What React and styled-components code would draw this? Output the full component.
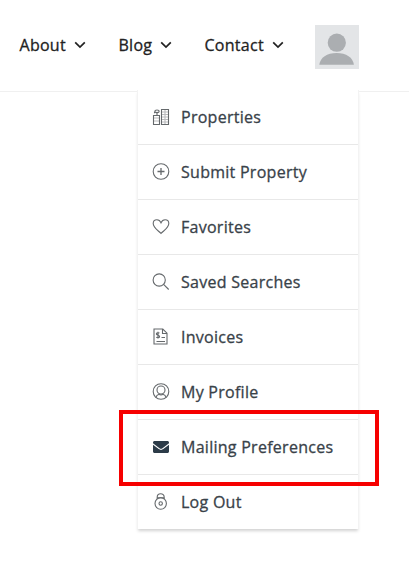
import styled, { createGlobalStyle } from "styled-components";

const navLinks = [
    { label: "About", width: 99 },
    { label: "Blog", width: 86 },
    { label: "Contact", width: 110.5 },
];

const App = () => {
    return (
        <Page>
            <GlobalStyle />
            <Header>
                <Nav>
                    {navLinks.map(({ label, width }) => (
                        <NavLink key={label} $width={width}>
                            {label}
                            <Chevron />
                        </NavLink>
                    ))}
                </Nav>
                <Avatar>
                    <svg width="44" height="44" viewBox="0 0 44 44" fill="#abaeb1">
                        <circle cx="21.8" cy="17.7" r="9.1" />
                        <path d="M4.3 39.7c.8-7.3 7.7-11.8 17.3-11.8s16.5 4.5 17.3 11.8z" />
                    </svg>
                </Avatar>
            </Header>

            <Menu>
                {menuItems.map(({ label, icon, solid, highlighted }) => (
                    <MenuItem key={label}>
                        <MenuIcon $solid={solid} viewBox="0 0 18 18">{icon}</MenuIcon>
                        {label}
                        {highlighted && <Highlight />}
                    </MenuItem>
                ))}
            </Menu>
        </Page>
    )
}

const Chevron = () => (
    <svg width="12" height="8" viewBox="0 0 12 8" fill="none" stroke="#222" strokeWidth="1.7">
        <path d="M1.2 1.4 6 6.1l4.8-4.7" />
    </svg>
)

const menuItems = [
    {
        label: "Properties",
        icon: (
            <>
                <path d="M9.5 16.5V1.5h7v15zM1.500 16.500v-9h6v9z" />
                <path d="M9.500 4h7M9.500 6.500h7M9.500 9h7M9.500 11.500h7M9.500 14h7M1.500 10h6M1.500 13h6M13 1.500v15" opacity="0.45" />
                <ellipse cx="5" cy="3.300" rx="2.200" ry="1.300" />
                <path d="M2.500 5.300V3.800M5 4.700v2.800" />
            </>
        ),
    },
    {
        label: "Submit Property",
        icon: (
            <>
                <circle cx="9" cy="8.500" r="7.800" />
                <path d="M9 5v7M5.500 8.500h7" strokeWidth="1.300" />
            </>
        ),
    },
    {
        label: "Favorites",
        icon: <path d="M9 15.500C6.800 13 1.200 10.100 1.200 5.600c0-2.300 1.700-3.800 3.700-3.800 1.900 0 3.300 1.100 4.100 3 .8-1.900 2.200-3 4.100-3 2 0 3.700 1.500 3.700 3.800 0 4.500-5.600 7.400-7.800 9.900z" />,
    },
    {
        label: "Saved Searches",
        icon: (
            <>
                <circle cx="7.200" cy="7" r="6.100" />
                <path d="m11.600 11.400 5.100 5.100" />
            </>
        ),
    },
    {
        label: "Invoices",
        icon: (
            <>
                <path d="M2 1h8.800l4.200 4.200v10.800H2zM10.500 1.200v4.300h4.300" />
                <path d="M7.500 5.200C6.800 4.500 4.400 4.500 4.400 6c0 1.700 3.200.8 3.200 2.500 0 1.500-2.500 1.500-3.300.7M6 3.800v6.800M9.500 9.500h3.500M4.500 13.500h8.500" strokeWidth="1.200" />
            </>
        ),
    },
    {
        label: "My Profile",
        icon: (
            <>
                <circle cx="9" cy="8.500" r="7.800" />
                <circle cx="9" cy="7" r="4" />
                <path d="M4 14.500c.3-1.800 1.500-2.800 3.100-3.200.8.700 3 .7 3.800 0 1.600.4 2.800 1.400 3.100 3.200" />
            </>
        ),
    },
    {
        label: "Mailing Preferences",
        solid: true,
        highlighted: true,
        icon: (
            <>
                <path d="M2.600 3h12.800c.9 0 1.600.6 1.600 1.500v.7l-6.500 5c-.9.700-2.100.7-3 0L1 5.200v-.7C1 3.600 1.700 3 2.600 3z" />
                <path d="M1 6.700l5.700 4.400c1.400 1.100 3.200 1.100 4.600 0L17 6.700v6.800c0 .9-.7 1.500-1.600 1.500H2.600c-.9 0-1.600-.6-1.600-1.500z" />
            </>
        ),
    },
    {
        label: "Log Out",
        icon: (
            <>
                <circle cx="8.700" cy="10.500" r="5.700" />
                <circle cx="8.700" cy="10.500" r="1.700" />
                <path d="M5.200 6V4.200a3.500 3.500 0 0 1 7 0V6M5.200 4.700h7" />
            </>
        ),
    },
];

const GlobalStyle = createGlobalStyle`
    *, *::before, *::after {
        box-sizing: border-box;
    }

    body {
        margin: 0;
        background-color: #fff;
        font-family: "Open Sans", "Noto Sans", sans-serif;
        font-weight: 500;
        letter-spacing: 0.27px;
        -webkit-text-stroke: 0.3px;
    }
`;

const Page = styled.div`
    min-height: 100vh;
`;

const Header = styled.header`
    display: flex;
    align-items: center;
    height: 92px;
    padding: 2px 0 0 19.5px;
    border-bottom: 1px solid #f0f0f0;
`;

const Nav = styled.nav`
    display: flex;
`;

const NavLink = styled.a`
    display: flex;
    align-items: center;
    gap: 8px;
    width: ${({ $width }) => $width}px;
    padding-bottom: 4px;
    color: #222;
    font-size: 16px;
    line-height: 24px;
`;

const Avatar = styled.div`
    width: 44px;
    height: 44px;
    margin-top: 1px;
    background-color: #e3e5e7;

    svg {
        display: block;
    }
`;

const Menu = styled.ul`
    width: 222px;
    margin: -2px 0 0 137px;
    padding: 0;
    position: relative;
    list-style: none;
    background-color: #fff;
    border: 1px solid #f3f3f3;
    border-top: 0;
    border-bottom: 0;
    box-shadow: 0 3px 3px -1px rgba(0, 0, 0, 0.18);
`;

const MenuItem = styled.li`
    display: flex;
    align-items: center;
    gap: 12px;
    position: relative;
    height: 55px;
    padding: 0 0 1px 13.5px;
    border-bottom: 1px solid #e8e8e8;
    color: #394249;
    font-size: 16px;
    line-height: 24px;

    &:last-child {
        height: 54px;
        padding-bottom: 0;
        border-bottom: 0;
    }
`;

const MenuIcon = styled.svg`
    width: 18px;
    height: 18px;
    margin-right: -0.5px;
    fill: ${({ $solid }) => $solid ? "#2c3b48" : "none"};
    stroke: ${({ $solid }) => $solid ? "none" : "#65696c"};
    stroke-width: 1.1;
`;

const Highlight = styled.div`
    position: absolute;
    top: -10px;
    left: -19px;
    width: 260px;
    height: 76px;
    border: 4px solid #f60000;
`;

export default App;
